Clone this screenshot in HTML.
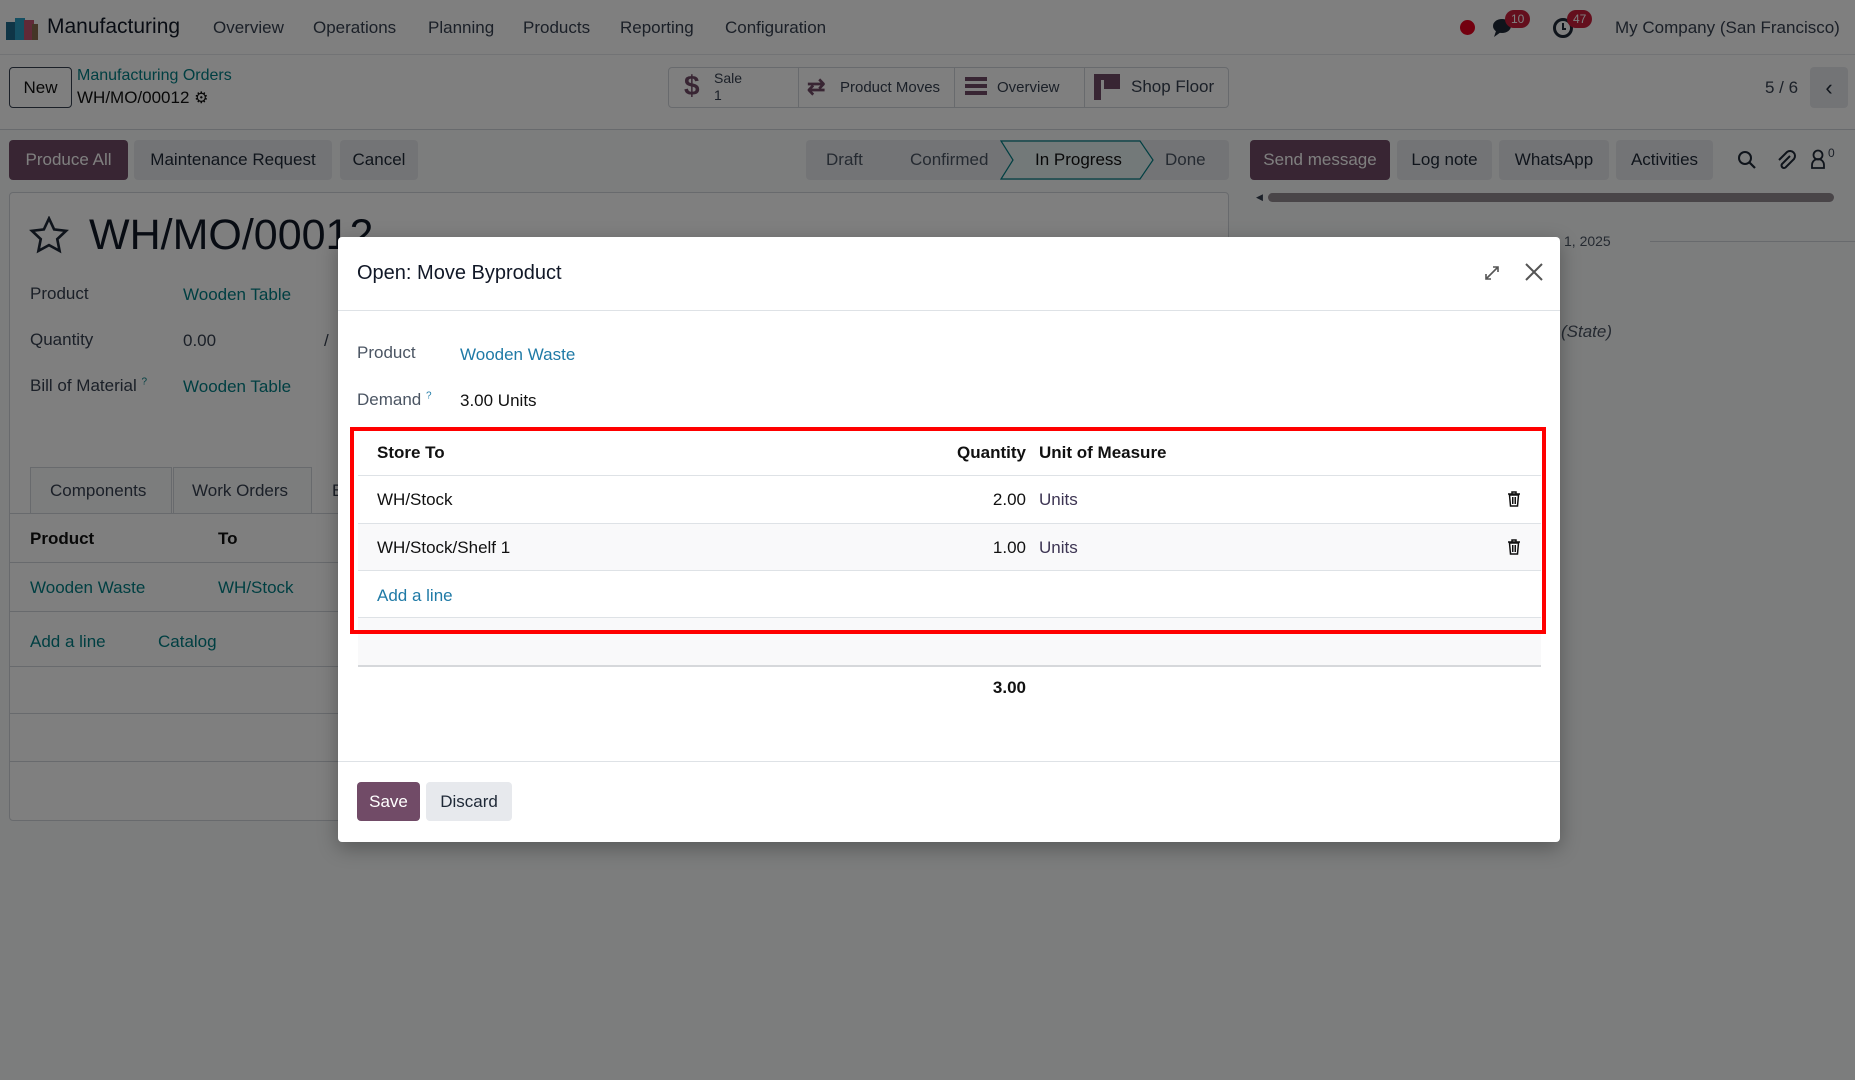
<!DOCTYPE html>
<html><head><meta charset="utf-8">
<style>
*{box-sizing:border-box;margin:0;padding:0}
body{width:1855px;height:1080px;overflow:hidden;background:#f9fafb;font-family:"Liberation Sans",sans-serif;color:#374151;font-size:17px;position:relative}
.a{position:absolute;white-space:nowrap}
.link{color:#017e84}
.btn{position:absolute;border-radius:4px;display:flex;align-items:center;justify-content:center;font-size:17px}
.gray{background:#e7e9ed;color:#1f2937}
.prim{background:#714b67;color:#fff}
#ov{position:absolute;left:0;top:0;width:1855px;height:1080px;background:rgba(0,0,0,0.5)}
.modal{position:absolute;left:338px;top:237px;width:1222px;height:605px;background:#fff;border-radius:4px;box-shadow:0 6px 20px rgba(0,0,0,.3)}
.m{position:absolute;white-space:nowrap}
.hr{position:absolute;height:1px;background:#dee2e6}
</style></head><body>
<div class="a" style="left:0;top:0;width:1855px;height:55px;background:#fff;border-bottom:1px solid #e5e7eb"></div>
<svg class="a" style="left:6px;top:14px" width="32" height="26" viewBox="0 0 32 26"><rect x="0" y="8" width="10" height="18" fill="#1f6b8c"/><rect x="9" y="4" width="10" height="22" fill="#2a9fc4"/><rect x="18" y="6" width="10" height="20" fill="#c2536e"/><rect x="26" y="10" width="6" height="16" fill="#8a6a4c"/></svg>
<div class="a" style="left:47px;top:15px;font-size:21px;color:#111827">Manufacturing</div>
<div class="a" style="left:213px;top:18px">Overview</div>
<div class="a" style="left:313px;top:18px">Operations</div>
<div class="a" style="left:428px;top:18px">Planning</div>
<div class="a" style="left:523px;top:18px">Products</div>
<div class="a" style="left:620px;top:18px">Reporting</div>
<div class="a" style="left:725px;top:18px">Configuration</div>
<div class="a" style="left:1460px;top:20px;width:15px;height:15px;border-radius:50%;background:#e6001e"></div>
<svg class="a" style="left:1492px;top:17px" width="24" height="22" viewBox="0 0 24 22"><ellipse cx="10" cy="9" rx="9" ry="7" fill="#1f2937"/><path d="M4 14 L2 20 L9 15Z" fill="#1f2937"/></svg>
<div class="a" style="left:1505px;top:10px;background:#c81e3a;color:#fff;font-size:12px;border-radius:10px;padding:2px 6px">10</div>
<svg class="a" style="left:1552px;top:16px" width="24" height="24" viewBox="0 0 24 24"><circle cx="11" cy="12" r="8.5" fill="none" stroke="#1f2937" stroke-width="3"/><path d="M11 7v6h3" stroke="#1f2937" stroke-width="2" fill="none"/></svg>
<div class="a" style="left:1567px;top:10px;background:#c81e3a;color:#fff;font-size:12px;border-radius:10px;padding:2px 6px">47</div>
<div class="a" style="left:1615px;top:18px">My Company (San Francisco)</div>
<div class="a" style="left:0;top:55px;width:1855px;height:75px;background:#fff;border-bottom:1px solid #d1d5db"></div>
<div class="btn" style="left:9px;top:67px;width:63px;height:41px;border:1px solid #374151;background:#fff;color:#111">New</div>
<div class="a link" style="left:77px;top:67px;font-size:16px">Manufacturing Orders</div>
<div class="a" style="left:77px;top:88px;font-size:17px;color:#111">WH/MO/00012 <span style="font-size:16px">⚙</span></div>
<div class="a" style="left:668px;top:67px;width:561px;height:41px;border:1px solid #d1d5db;border-radius:4px;background:#fff"></div>
<div class="a" style="left:798px;top:67px;width:1px;height:41px;background:#d1d5db"></div>
<div class="a" style="left:954px;top:67px;width:1px;height:41px;background:#d1d5db"></div>
<div class="a" style="left:1084px;top:67px;width:1px;height:41px;background:#d1d5db"></div>
<div class="a" style="left:684px;top:70px;font-size:28px;font-weight:bold;color:#714b67">$</div>
<div class="a" style="left:714px;top:70px;font-size:14px;line-height:17px">Sale<br>1</div>
<div class="a" style="left:807px;top:74px;font-size:22px;color:#714b67;font-weight:bold">⇄</div>
<div class="a" style="left:840px;top:79px;font-size:15px">Product Moves</div>
<div class="a" style="left:965px;top:77px;width:22px;height:4px;background:#714b67;box-shadow:0 7px 0 #714b67,0 14px 0 #714b67"></div>
<div class="a" style="left:997px;top:79px;font-size:15px">Overview</div>
<div class="a" style="left:1094px;top:74px;width:7px;height:26px;background:#714b67"></div>
<div class="a" style="left:1094px;top:74px;width:26px;height:6px;background:#714b67"></div>
<div class="a" style="left:1104px;top:80px;width:16px;height:9px;background:#714b67"></div>
<div class="a" style="left:1131px;top:77px;font-size:17px">Shop Floor</div>
<div class="a" style="left:1765px;top:78px">5 / 6</div>
<div class="btn gray" style="left:1810px;top:67px;width:38px;height:41px;font-size:22px">‹</div>
<div class="btn prim" style="left:9px;top:140px;width:119px;height:40px">Produce All</div>
<div class="btn gray" style="left:134px;top:140px;width:198px;height:40px">Maintenance Request</div>
<div class="btn gray" style="left:340px;top:140px;width:78px;height:40px">Cancel</div>
<div class="a" style="left:806px;top:140px;width:423px;height:40px;background:#e7e9ed;border-radius:4px"></div>
<div class="a" style="left:826px;top:150px;color:#4b5563">Draft</div>
<div class="a" style="left:910px;top:150px;color:#4b5563">Confirmed</div>
<svg class="a" style="left:1000px;top:140px" width="155" height="40"><path d="M1 1H140L153 20L140 39H1L13 20Z" fill="#e6f2f3" stroke="#017e84" stroke-width="1.2"/></svg>
<div class="a" style="left:1035px;top:150px;color:#111">In Progress</div>
<div class="a" style="left:1165px;top:150px;color:#4b5563">Done</div>
<div class="btn prim" style="left:1250px;top:140px;width:140px;height:40px">Send message</div>
<div class="btn gray" style="left:1397px;top:140px;width:95px;height:40px">Log note</div>
<div class="btn gray" style="left:1499px;top:140px;width:110px;height:40px">WhatsApp</div>
<div class="btn gray" style="left:1616px;top:140px;width:97px;height:40px">Activities</div>
<svg class="a" style="left:1737px;top:150px" width="20" height="20" viewBox="0 0 20 20"><circle cx="8" cy="8" r="6" fill="none" stroke="#1f2937" stroke-width="2"/><path d="M12.5 12.5L18 18" stroke="#1f2937" stroke-width="2.2"/></svg>
<svg class="a" style="left:1775px;top:148px" width="22" height="24" viewBox="0 0 22 24"><path d="M15 8L7 16a2.5 2.5 0 0 0 3.5 3.5L19 11a5 5 0 0 0-7-7L4 12" fill="none" stroke="#1f2937" stroke-width="2"/></svg>
<svg class="a" style="left:1810px;top:149px" width="16" height="20" viewBox="0 0 16 20"><circle cx="8" cy="6" r="4.5" fill="none" stroke="#1f2937" stroke-width="1.8"/><path d="M2 19v-3a6 6 0 0 1 12 0v3z" fill="none" stroke="#1f2937" stroke-width="1.8"/></svg>
<div class="a" style="left:1828px;top:146px;font-size:12px">0</div>
<div class="a" style="left:1256px;top:192px;font-size:9px">◀</div>
<div class="a" style="left:1268px;top:193px;width:566px;height:9px;border-radius:5px;background:#938b91"></div>
<div class="a" style="left:1564px;top:233px;font-size:14px;color:#4b5563">1, 2025</div>
<div class="a" style="left:1650px;top:241px;width:205px;height:1px;background:#d1d5db"></div>
<div class="a" style="left:1561px;top:322px;font-style:italic;color:#4b5563">(State)</div>
<div class="a" style="left:9px;top:192px;width:1220px;height:629px;background:#fff;border:1px solid #d1d5db;border-radius:4px"></div>
<svg class="a" style="left:29px;top:216px" width="40" height="38" viewBox="0 0 24 23"><path d="M12 1.5l3.1 6.6 7.2.9-5.3 5 1.4 7.1L12 17.6 5.6 21.1 7 14 1.7 9l7.2-.9z" fill="none" stroke="#1f2937" stroke-width="1.6"/></svg>
<div class="a" style="left:89px;top:211px;font-size:43px;color:#111827">WH/MO/00012</div>
<div class="a" style="left:30px;top:284px;color:#374151">Product</div>
<div class="a link" style="left:183px;top:285px">Wooden Table</div>
<div class="a" style="left:30px;top:330px">Quantity</div>
<div class="a" style="left:183px;top:331px">0.00</div>
<div class="a" style="left:324px;top:331px">/</div>
<div class="a" style="left:30px;top:376px">Bill of Material <sup style="font-size:10px;color:#017e84">?</sup></div>
<div class="a link" style="left:183px;top:377px">Wooden Table</div>
<div class="a" style="left:30px;top:467px;width:142px;height:47px;border:1px solid #d1d5db;border-bottom:none;background:#f9fafb"></div>
<div class="a" style="left:173px;top:467px;width:139px;height:47px;border:1px solid #d1d5db;border-bottom:none;background:#f9fafb"></div>
<div class="a" style="left:50px;top:481px">Components</div>
<div class="a" style="left:192px;top:481px">Work Orders</div>
<div class="a" style="left:332px;top:481px">B</div>
<div class="a" style="left:10px;top:513px;width:1218px;height:1px;background:#d1d5db"></div>
<div class="a" style="left:30px;top:529px;font-weight:bold;color:#111">Product</div>
<div class="a" style="left:218px;top:529px;font-weight:bold;color:#111">To</div>
<div class="a" style="left:10px;top:562px;width:1218px;height:1px;background:#d1d5db"></div>
<div class="a link" style="left:30px;top:578px">Wooden Waste</div>
<div class="a link" style="left:218px;top:578px">WH/Stock</div>
<div class="a" style="left:10px;top:611px;width:1218px;height:1px;background:#d1d5db"></div>
<div class="a link" style="left:30px;top:632px">Add a line</div>
<div class="a link" style="left:158px;top:632px">Catalog</div>
<div class="a" style="left:10px;top:666px;width:1218px;height:1px;background:#d1d5db"></div>
<div class="a" style="left:10px;top:713px;width:1218px;height:1px;background:#d1d5db"></div>
<div class="a" style="left:10px;top:761px;width:1218px;height:1px;background:#d1d5db"></div>
<div id="ov"></div>
<div class="modal">
<div class="m" style="left:19px;top:25px;font-size:20px;color:#111827">Open: Move Byproduct</div>
<svg class="m" style="left:1146px;top:28px" width="16" height="16" viewBox="0 0 16 16"><path d="M2 14L14 2M9 2h5v5M2 9v5h5" stroke="#555" stroke-width="1.6" fill="none"/></svg>
<svg class="m" style="left:1186px;top:25px" width="20" height="20" viewBox="0 0 20 20"><path d="M2 2L18 18M18 2L2 18" stroke="#555" stroke-width="2"/></svg>
<div class="hr" style="left:0;top:73px;width:1222px"></div>
<div class="m" style="left:19px;top:106px;color:#4b5563">Product</div>
<div class="m" style="left:122px;top:108px;color:#1f7aa6">Wooden Waste</div>
<div class="m" style="left:19px;top:153px;color:#4b5563">Demand <sup style="font-size:10px;color:#1f7aa6">?</sup></div>
<div class="m" style="left:122px;top:154px;color:#111">3.00 Units</div>
<div class="m" style="left:20px;top:380px;width:1183px;height:48px;background:#f9f9fa"></div>
<div class="hr" style="left:20px;top:428px;width:1183px;height:2px;background:#d6d8db"></div>
<div class="m" style="left:20px;top:286px;width:1183px;height:48px;background:#f9f9fa"></div>
<div class="hr" style="left:20px;top:238px;width:1183px"></div>
<div class="hr" style="left:20px;top:286px;width:1183px"></div>
<div class="hr" style="left:20px;top:333px;width:1183px"></div>
<div class="hr" style="left:20px;top:380px;width:1183px"></div>
<div class="m" style="left:39px;top:206px;font-weight:bold;color:#111">Store To</div>
<div class="m" style="left:688px;top:206px;width:0;"><span style="position:absolute;right:0;font-weight:bold;color:#111">Quantity</span></div>
<div class="m" style="left:701px;top:206px;font-weight:bold;color:#111">Unit of Measure</div>
<div class="m" style="left:39px;top:253px;color:#111">WH/Stock</div>
<div class="m" style="left:688px;top:253px"><span style="position:absolute;right:0;color:#111">2.00</span></div>
<div class="m" style="left:701px;top:253px;color:#3d3553">Units</div>
<div class="m" style="left:39px;top:301px;color:#111">WH/Stock/Shelf 1</div>
<div class="m" style="left:688px;top:301px"><span style="position:absolute;right:0;color:#111">1.00</span></div>
<div class="m" style="left:701px;top:301px;color:#3d3553">Units</div>
<svg class="m" style="left:1169px;top:254px" width="14" height="16" viewBox="0 0 14 16"><path d="M1 3h12M5 3V1h4v2M2.5 4h9l-1 11h-7z" stroke="#111" stroke-width="1.5" fill="none"/><path d="M5.5 6v7M7 6v7M8.5 6v7" stroke="#111"/></svg>
<svg class="m" style="left:1169px;top:302px" width="14" height="16" viewBox="0 0 14 16"><path d="M1 3h12M5 3V1h4v2M2.5 4h9l-1 11h-7z" stroke="#111" stroke-width="1.5" fill="none"/><path d="M5.5 6v7M7 6v7M8.5 6v7" stroke="#111"/></svg>
<div class="m" style="left:39px;top:349px;color:#1f7aa6">Add a line</div>
<div class="m" style="left:12px;top:190px;width:1196px;height:207px;border:4px solid #ff0000"></div>
<div class="m" style="left:688px;top:441px"><span style="position:absolute;right:0;font-weight:bold;color:#111">3.00</span></div>
<div class="hr" style="left:0;top:524px;width:1222px"></div>
<div class="btn prim" style="left:19px;top:545px;width:63px;height:39px">Save</div>
<div class="btn gray" style="left:88px;top:545px;width:86px;height:39px">Discard</div>
</div>
</body></html>
